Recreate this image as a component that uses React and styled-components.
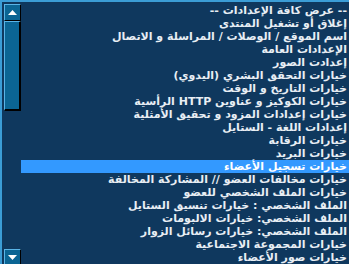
import React from 'react'
import styled, { createGlobalStyle } from 'styled-components'

const GlobalStyle = createGlobalStyle`
    html, body {
        margin: 0;
        padding: 0;
        background: #0f385e;
    }
`;

const Frame = styled.div`
    width: 349px;
    height: 264px;
    box-sizing: border-box;
    border-top: 2px solid #3b9dd6;
    border-left: 2px solid #3b9dd6;
    background: #0f385e;
    padding: 2px 0 0 2px;
    display: flex;
    flex-direction: row;
    overflow: hidden;
`;

const ScrollBar = styled.div`
    width: 17px;
    flex: none;
    display: flex;
    flex-direction: column;
    height: 262px;
`;

const ArrowButton = styled.div`
    width: 17px;
    height: 17px;
    box-sizing: border-box;
    background: #0b6594;
    border-top: 1px solid #5ab4e6;
    border-left: 1px solid #5ab4e6;
    border-right: 1px solid #000;
    border-bottom: 1px solid #000;
    display: flex;
    align-items: center;
    justify-content: center;
    flex: none;
`;

const Thumb = styled.div`
    width: 17px;
    height: 90px;
    box-sizing: border-box;
    background: #0b6594;
    border-top: 1px solid #5ab4e6;
    border-left: 1px solid #5ab4e6;
    border-right: 2px solid #000;
    border-bottom: 2px solid #000;
    flex: none;
`;

const Track = styled.div`
    flex: 1;
`;

const Options = styled.div`
    flex: 1;
    direction: rtl;
    display: flex;
    flex-direction: column;
    font-family: "DejaVu Sans", Tahoma, sans-serif;
    font-weight: bold;
    font-size: 11px;
    color: #e8eef4;
`;

const Option = styled.div`
    height: 13px;
    line-height: 13px;
    padding-right: 2px;
    white-space: nowrap;
    background: ${p => (p.selected ? '#3399ff' : 'transparent')};
    color: ${p => (p.selected ? '#ffffff' : 'inherit')};
`;

const Arrow = ({ down }) => (
    <svg width="9" height="5" viewBox="0 0 9 5">
        {down
            ? <polygon points="0,0 9,0 4.5,5" fill="#fff" />
            : <polygon points="0,5 9,5 4.5,0" fill="#fff" />}
    </svg>
);

const items = [
    '-- عرض كافة الإعدادات --',
    'إغلاق أو تشغيل المنتدى',
    'اسم الموقع / الوصلات / المراسلة و الاتصال',
    'الإعدادات العامة',
    'إعدادت الصور',
    'خيارات التحقق البشري (اليدوي)',
    'خيارات التاريخ و الوقت',
    'خيارات الكوكيز و عناوين HTTP الرأسية',
    'خيارات إعدادات المزود و تحقيق الأمثلية',
    'إعدادات اللغة - الستايل',
    'خيارات الرقابة',
    'خيارات البريد',
    'خيارات تسجيل الأعضاء',
    'خيارات مخالفات العضو // المشاركة المخالفة',
    'خيارات الملف الشخصي للعضو',
    'الملف الشخصي : خيارات تنسيق الستايل',
    'الملف الشخصي: خيارات الالبومات',
    'الملف الشخصي: خيارات رسائل الزوار',
    'خيارات المجموعة الاجتماعية',
    'خيارات صور الأعضاء'
];

const App = () => (
    <>
        <GlobalStyle />
        <Frame>
            <ScrollBar>
                <ArrowButton><Arrow /></ArrowButton>
                <Thumb />
                <Track />
                <ArrowButton><Arrow down /></ArrowButton>
            </ScrollBar>
            <Options>
                {items.map((text, i) => (
                    <Option key={i} selected={i === 12}>{text}</Option>
                ))}
            </Options>
        </Frame>
    </>
)

export default App
